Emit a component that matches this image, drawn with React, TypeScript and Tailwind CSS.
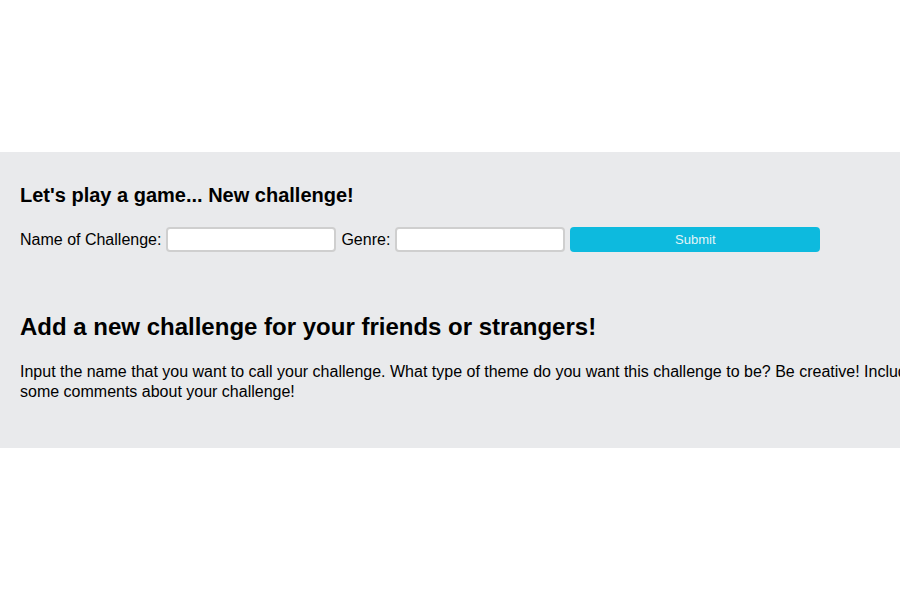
export default function App() {
    return (
        <div className="w-[900px] h-[600px] overflow-hidden bg-white font-['Liberation_Sans',Arial,sans-serif] text-black">
            <section className="mt-[152px] h-[296px] bg-[#e9eaec] pl-5 pt-[32px]">
                <h1 className="text-[20px] leading-[23px] font-bold">Let's play a game... New challenge!</h1>

                <form className="mt-[20px] flex h-[25px] items-center text-[16px]" onSubmit={(e) => e.preventDefault()}>
                    <label htmlFor="name">Name of Challenge:</label>
                    <input id="name" type="text" className="ml-[5px] h-[25px] w-[170px] rounded-[4px] border-2 border-[#cfcfcf] bg-white" />
                    <label htmlFor="genre" className="ml-[5px]">Genre:</label>
                    <input id="genre" type="text" className="ml-[5px] h-[25px] w-[170px] rounded-[4px] border-2 border-[#cfcfcf] bg-white" />
                    <button type="submit" className="ml-[5px] h-[25px] w-[250px] rounded-[4px] bg-[#0dbade] text-[13px] text-[#e3f4f8]">
                        Submit
                    </button>
                </form>

                <h2 className="mt-[61px] text-[24px] leading-[28px] font-bold">Add a new challenge for your friends or strangers!</h2>
                <p className="mt-[21px] w-[920px] text-[16px] leading-[20px]">
                    Input the name that you want to call your challenge. What type of theme do you want this challenge to be? Be creative! Include some comments about your challenge!
                </p>
            </section>
        </div>
    )
}
